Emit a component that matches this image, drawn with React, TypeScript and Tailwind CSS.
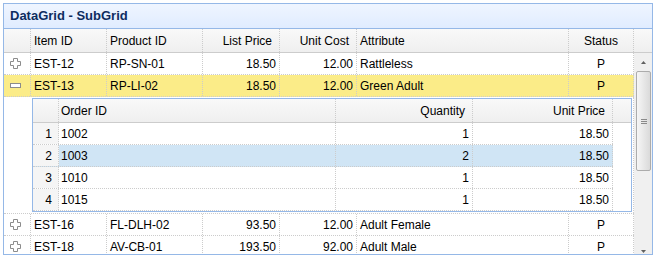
import React from "react";

type Align = "left" | "right" | "center";

interface Col {
  key: string;
  label: string;
  w: string;
  align: Align;
}

const mainCols: Col[] = [
  { key: "item", label: "Item ID", w: "w-[76px]", align: "left" },
  { key: "product", label: "Product ID", w: "w-[96px]", align: "left" },
  { key: "list", label: "List Price", w: "w-[77px]", align: "right" },
  { key: "cost", label: "Unit Cost", w: "w-[77px]", align: "right" },
  { key: "attr", label: "Attribute", w: "w-[212px]", align: "left" },
  { key: "status", label: "Status", w: "w-[65px]", align: "center" },
];

const subCols: Col[] = [
  { key: "order", label: "Order ID", w: "w-[277px]", align: "left" },
  { key: "qty", label: "Quantity", w: "w-[137px]", align: "right" },
  { key: "price", label: "Unit Price", w: "w-[140px]", align: "right" },
];

const items = [
  { item: "EST-12", product: "RP-SN-01", list: "18.50", cost: "12.00", attr: "Rattleless", status: "P" },
  { item: "EST-13", product: "RP-LI-02", list: "18.50", cost: "12.00", attr: "Green Adult", status: "P" },
  { item: "EST-16", product: "FL-DLH-02", list: "93.50", cost: "12.00", attr: "Adult Female", status: "P" },
  { item: "EST-18", product: "AV-CB-01", list: "193.50", cost: "92.00", attr: "Adult Male", status: "P" },
];

const orders = [
  { order: "1002", qty: "1", price: "18.50" },
  { order: "1003", qty: "2", price: "18.50" },
  { order: "1010", qty: "1", price: "18.50" },
  { order: "1015", qty: "1", price: "18.50" },
];

const cellBase = "shrink-0 h-full border-r border-dotted border-[#ccc] flex items-center whitespace-nowrap overflow-hidden";

function dataAlign(a: Align) {
  if (a === "right") return "justify-end pr-[3px]";
  if (a === "center") return "justify-center";
  return "justify-start pl-[3px]";
}

function headAlign(a: Align) {
  if (a === "right") return "justify-end pr-[7px]";
  if (a === "center") return "justify-center";
  return "justify-start pl-[3px]";
}

function PlusIcon() {
  return (
    <svg width="11" height="11" viewBox="0 0 11 11">
      <path d="M3.5 0.5h4v3h3v4h-3v3h-4v-3h-3v-4h3z" fill="#fff" stroke="#8c8c8c" />
    </svg>
  );
}

function MinusIcon() {
  return (
    <svg width="11" height="5" viewBox="0 0 11 5">
      <rect x="0.5" y="0.5" width="10" height="4" fill="#fff" stroke="#8c8c8c" />
    </svg>
  );
}

function ItemRow({ row, expanded, selected }: { row: Record<string, string>; expanded?: boolean; selected?: boolean }) {
  return (
    <div className={`flex h-[22px] border-b border-dotted border-[#ccc] ${selected ? "bg-[#fbec88]" : "bg-white"}`}>
      <div className={`${cellBase} w-[27px] pl-[6px]`}>{expanded ? <MinusIcon /> : <PlusIcon />}</div>
      {mainCols.map((c) => (
        <div key={c.key} className={`${cellBase} ${c.w} ${dataAlign(c.align)}`}>
          {row[c.key]}
        </div>
      ))}
    </div>
  );
}

function SubGrid() {
  return (
    <div className="ml-[1px] mt-[1px] w-[600px] h-[114px] border border-[#95b8e7] flex flex-col">
      {/* header */}
      <div className="flex h-[24px] shrink-0 border-b border-[#ccc] bg-linear-to-b from-[#f9f9f9] to-[#efefef]">
        <div className={`${cellBase} w-[26px]`} />
        {subCols.map((c) => (
          <div key={c.key} className={`${cellBase} ${c.w} ${c.align === "right" ? "justify-end pr-[7px]" : "justify-start pl-[2px]"}`}>
            {c.label}
          </div>
        ))}
      </div>
      <div className="flex">
        <div className="w-[580px]">
          {orders.map((o, i) => (
            <div key={o.order} className={`flex h-[22px] border-b border-dotted border-[#ccc] ${i === 1 ? "bg-[#d0e5f5]" : "bg-white"}`}>
              <div className={`${cellBase} w-[26px] justify-end pr-[6px] bg-[#f5f5f5]`}>{i + 1}</div>
              {subCols.map((c) => (
                <div key={c.key} className={`${cellBase} ${c.w} ${c.align === "right" ? "justify-end pr-[3px]" : "justify-start pl-[2px]"}`}>
                  {(o as Record<string, string>)[c.key]}
                </div>
              ))}
            </div>
          ))}
        </div>
      </div>
    </div>
  );
}

function Scrollbar() {
  return (
    <div className="w-[18px] h-[207px] shrink-0 bg-[#f0f0f0] flex flex-col">
      <div className="h-[18px] flex items-center justify-center">
        <svg width="5" height="3" viewBox="0 0 5 3">
          <path d="M2.5 0L5 3H0z" fill="#606060" />
        </svg>
      </div>
      <div className="ml-[2px] w-[15px] h-[100px] rounded-[2px] border border-[#acacac] bg-linear-to-r from-[#f6f6f6] to-[#dadada] flex flex-col items-center justify-center gap-[1px]">
        <div className="w-[6px] h-[1px] bg-[#8a8a8a]" />
        <div className="w-[6px] h-[1px] bg-[#8a8a8a]" />
        <div className="w-[6px] h-[1px] bg-[#8a8a8a]" />
      </div>
      <div className="flex-1" />
      <div className="h-[17px] flex items-center justify-center">
        <svg width="5" height="3" viewBox="0 0 5 3">
          <path d="M0 0H5L2.5 3z" fill="#606060" />
        </svg>
      </div>
    </div>
  );
}

export default function App() {
  return (
    <div className="pl-[3px] pt-[3px] bg-white font-['Liberation_Sans',Arial,sans-serif] text-[12px] text-black">
      <div className="w-[650px] h-[252px] border border-[#95b8e7] overflow-hidden flex flex-col">
        {/* panel title */}
        <div className="h-[25px] shrink-0 border-b border-[#95b8e7] bg-linear-to-b from-[#eff5ff] to-[#e0ecff] flex items-center pl-[6px] text-[13px] font-bold text-[#0e2d5f]">
          DataGrid - SubGrid
        </div>

        {/* column headers */}
        <div className="flex h-[24px] shrink-0 border-b border-[#ccc] bg-linear-to-b from-[#f9f9f9] to-[#efefef]">
          <div className={`${cellBase} w-[27px]`} />
          {mainCols.map((c) => (
            <div key={c.key} className={`${cellBase} ${c.w} ${headAlign(c.align)}`}>
              {c.label}
            </div>
          ))}
        </div>

        {/* body */}
        <div className="flex-1 flex items-start overflow-hidden">
          <div className="w-[630px] shrink-0">
            <ItemRow row={items[0]} />
            <ItemRow row={items[1]} expanded selected />
            <div className="flex h-[117px] border-b border-dotted border-[#ccc]">
              <div className="w-[27px] shrink-0" />
              <div className="w-[603px] h-full border-r border-dotted border-[#ccc]">
                <SubGrid />
              </div>
            </div>
            <ItemRow row={items[2]} />
            <ItemRow row={items[3]} />
          </div>
          <Scrollbar />
        </div>
      </div>
    </div>
  );
}
